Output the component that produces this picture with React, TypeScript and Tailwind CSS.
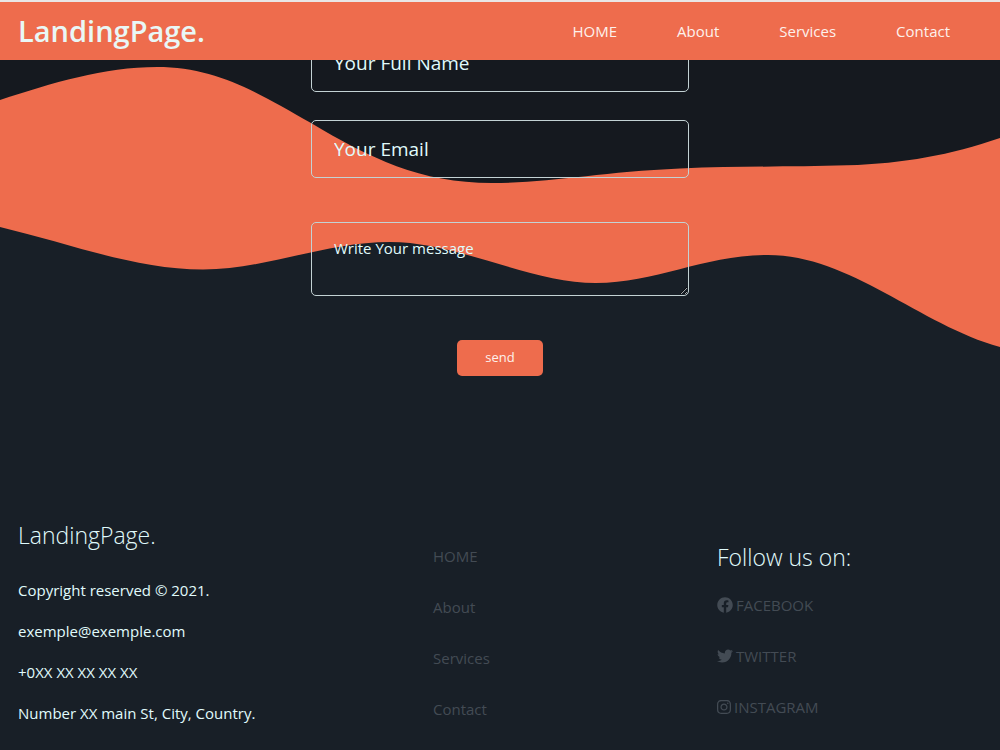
import React from 'react'
import { FaFacebook, FaInstagram, FaTwitter } from 'react-icons/fa'

const links = ['HOME', 'About', 'Services', 'Contact']

const socials = [
  { title: 'FACEBOOK', Icon: FaFacebook, size: 'h-4 w-4' },
  { title: 'TWITTER', Icon: FaTwitter, size: 'h-4 w-4' },
  { title: 'INSTAGRAM', Icon: FaInstagram, size: 'h-4 w-3.5' },
]

function Header() {
  return (
    <header
      className="sticky top-0 z-10 flex h-[60px] items-center justify-between border-t-2
       border-[#e9e6e6] bg-[#ee6c4d] pl-[18px] pr-[50px] text-[#e9f7f6]"
    >
      <a href="#home" className="text-[29px] font-semibold leading-10">
        LandingPage.
      </a>
      <nav className="flex gap-[60px]">
        {links.map((link) => (
          <a key={link} href={`#${link.toLowerCase()}`} className="text-[15px] text-[#fdf1ec]">
            {link}
          </a>
        ))}
      </nav>
    </header>
  )
}

function Waves() {
  return (
    <svg
      className="absolute left-0 top-0 h-[400px] w-full"
      viewBox="0 0 1000 400"
      preserveAspectRatio="none"
      aria-hidden="true"
    >
      <path
        fill="#ee6c4d"
        d="M0 60H1000V347C920 325 850 255 768 255C705 255 655 283 596 283C530 283 458 242 390 242C325 242 265 269.5 203 269.5C135 269.5 68 243 0 227Z"
      />
      <path
        fill="#15191f"
        d="M0 0H1000V138C950 155 905 163.5 847 165.3C790 167 740 166 680 168.5C600 172 550 183 492 183C420 183 370 158 311 123C255 91 215 67 157 67C104 67 52 83 0 100Z"
      />
    </svg>
  )
}

function ContactForm() {
  const field =
    'block w-full rounded-[5px] border border-[#c3d2d4] bg-transparent px-[22px] text-[#e0fbfc] placeholder:text-[#e0fbfc] placeholder:opacity-100'
  return (
    <form className="relative -mt-[26px] mx-auto flex w-[378px] max-w-full flex-col items-center">
      <input
        type="text"
        aria-label="Your Full Name"
        placeholder="Your Full Name"
        className={`${field} h-[58px] text-[19px]`}
      />
      <input
        type="email"
        aria-label="Your Email"
        placeholder="Your Email"
        className={`${field} mt-7 h-[58px] text-[19px]`}
      />
      <textarea
        aria-label="Write Your message"
        placeholder="Write Your message"
        className={`${field} mt-11 h-[74px] py-3.5 text-[15px]`}
      />
      <button
        type="submit"
        className="mt-11 h-9 rounded-[5px] bg-[#ee6c4d] px-7 text-[13px] text-[#fdf1ec]"
      >
        send
      </button>
    </form>
  )
}

function Footer() {
  return (
    <footer className="relative mt-[143px] grid grid-cols-[415fr_284fr_283fr] pl-[18px] text-[15px] text-[#e0fbfc]">
      <div>
        <h3 className="text-[23px] font-light leading-8">LandingPage.</h3>
        <div className="mt-[26px] flex flex-col gap-[15px] leading-[26px]">
          <p>Copyright reserved © 2021.</p>
          <p>exemple@exemple.com</p>
          <p>+0XX XX XX XX XX</p>
          <p>Number XX main St, City, Country.</p>
        </div>
      </div>
      <ul className="mt-6 flex flex-col gap-[25px] leading-[26px] text-[#434b54]">
        {links.map((link) => (
          <li key={link}>
            <a href={`#${link.toLowerCase()}`}>{link}</a>
          </li>
        ))}
      </ul>
      <div className="mt-[22px]">
        <h3 className="text-[23px] font-light leading-8">Follow us on:</h3>
        <ul className="mt-[19px] flex flex-col gap-[25px] leading-[26px] text-[#434b54]">
          {socials.map(({ title, Icon, size }) => (
            <li key={title}>
              <a href={`#${title.toLowerCase()}`} className="flex items-center gap-[3px]">
                <Icon className={size} />
                {title}
              </a>
            </li>
          ))}
        </ul>
      </div>
    </footer>
  )
}

export default function App() {
  return (
    <div className="relative min-h-screen bg-[#181f27] font-['Open_Sans',sans-serif]">
      <Waves />
      <Header />
      <ContactForm />
      <Footer />
    </div>
  )
}
